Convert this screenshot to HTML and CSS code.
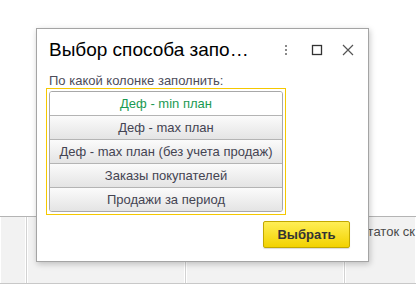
FILE: index.html
```html
<!DOCTYPE html>
<html lang="ru">
<head>
    <meta charset="UTF-8">
    <title>Выбор способа заполнения</title>
    <link rel="stylesheet" href="styles.css">
</head>
<body>

<div class="page">
    <div class="table-head">
        <div class="col col-1"></div>
        <div class="col col-2"></div>
        <div class="col col-3"></div>
        <div class="col col-4">Остаток ск</div>
    </div>
</div>

<div class="dialog">
    <div class="dialog-header">
        <div class="dialog-title">Выбор способа запо…</div>
        <div class="dialog-tools">
            <svg class="tool" width="10" height="12" viewBox="0 0 10 12">
                <rect x="3" y="1" width="2" height="2" fill="#8a8a8a"/>
                <rect x="3" y="5" width="2" height="2" fill="#8a8a8a"/>
                <rect x="3" y="9" width="2" height="2" fill="#8a8a8a"/>
            </svg>
            <svg class="tool" width="12" height="12" viewBox="0 0 12 12">
                <rect x="1.5" y="1.5" width="9" height="9" fill="none" stroke="#333" stroke-width="1.3"/>
            </svg>
            <svg class="tool" width="12" height="12" viewBox="0 0 12 12">
                <path d="M1 1 L11 11 M11 1 L1 11" stroke="#555" stroke-width="1.2"/>
            </svg>
        </div>
    </div>

    <div class="field-label">По какой колонке заполнить:</div>

    <div class="choice-box">
        <div class="choice-list">
            <div class="choice selected">Деф - min план</div>
            <div class="choice">Деф - max план</div>
            <div class="choice">Деф - max план (без учета продаж)</div>
            <div class="choice">Заказы покупателей</div>
            <div class="choice">Продажи за период</div>
        </div>
    </div>

    <div class="dialog-footer">
        <button class="btn-ok">Выбрать</button>
    </div>
</div>

</body>
</html>
```

FILE: styles.css
```css
body {
    margin: 0;
    background: #ffffff;
    font-family: 'Liberation Sans', Arial, sans-serif;
    font-size: 13px;
    color: #333333;
    overflow: hidden;
}
.page {
    height: 287px;
    padding-top: 216px;
    box-sizing: border-box;
}
.table-head {
    display: grid;
    grid-template-columns: 27px 159px 159px 1fr;
    height: 68px;
    border-top: 1px solid #b4b4b4;
    border-bottom: 1px solid #c8c8c8;
    background: #f2f2f2;
    box-sizing: border-box;
}
.col {
    border-right: 1px solid #d2d2d2;
    box-shadow: inset -1px 0 0 #ffffff, inset 1px 0 0 #ffffff;
    white-space: nowrap;
    overflow: hidden;
}
.col-4 {
    border-right: none;
    padding: 7px 0 0 6px;
    color: #4a4a4a;
    font-size: 13px;
}
.dialog {
    position: absolute;
    left: 36px;
    top: 28px;
    width: 333px;
    height: 234px;
    box-sizing: border-box;
    background: #ffffff;
    border: 1px solid #a4a4a4;
    box-shadow: 1px 2px 6px rgba(0, 0, 0, 0.22);
    padding: 10px 0 0 12px;
}
.dialog-header {
    display: flex;
    align-items: center;
    height: 22px;
}
.dialog-title {
    flex: 1;
    font-size: 19px;
    line-height: 22px;
    color: #000000;
}
.dialog-tools {
    display: flex;
    align-items: center;
    gap: 19px;
    padding-right: 14px;
}
.tool {
    display: block;
}
.field-label {
    margin-top: 12px;
    line-height: 15px;
    color: #4d4d5a;
    font-size: 13px;
}
.choice-box {
    margin: 0 0 0 -3px;
    width: 240px;
    height: 127px;
    box-sizing: border-box;
    border: 1px solid #f5c800;
    padding: 2px;
}
.choice-list {
    border: 1px solid #a8a8a8;
    border-radius: 3px;
    overflow: hidden;
}
.choice {
    height: 23px;
    line-height: 23px;
    text-align: center;
    color: #444452;
    background: linear-gradient(#fbfbfb, #e4e4e4);
    border-top: 1px solid #b4b4b4;
}
.choice:first-child {
    border-top: none;
}
.choice.selected {
    background: #ffffff;
    color: #1a9a52;
}
.dialog-footer {
    display: flex;
    justify-content: flex-end;
    padding: 6px 18px 0 0;
}
.btn-ok {
    width: 87px;
    height: 27px;
    border: 1px solid #c2a800;
    border-radius: 2px;
    background: linear-gradient(#ffee55, #f2d200);
    color: #333333;
    font-family: 'Liberation Sans', Arial, sans-serif;
    font-size: 13px;
    font-weight: bold;
    padding: 0;
    box-shadow: 0 1px 1px rgba(0, 0, 0, 0.15);
}
```
